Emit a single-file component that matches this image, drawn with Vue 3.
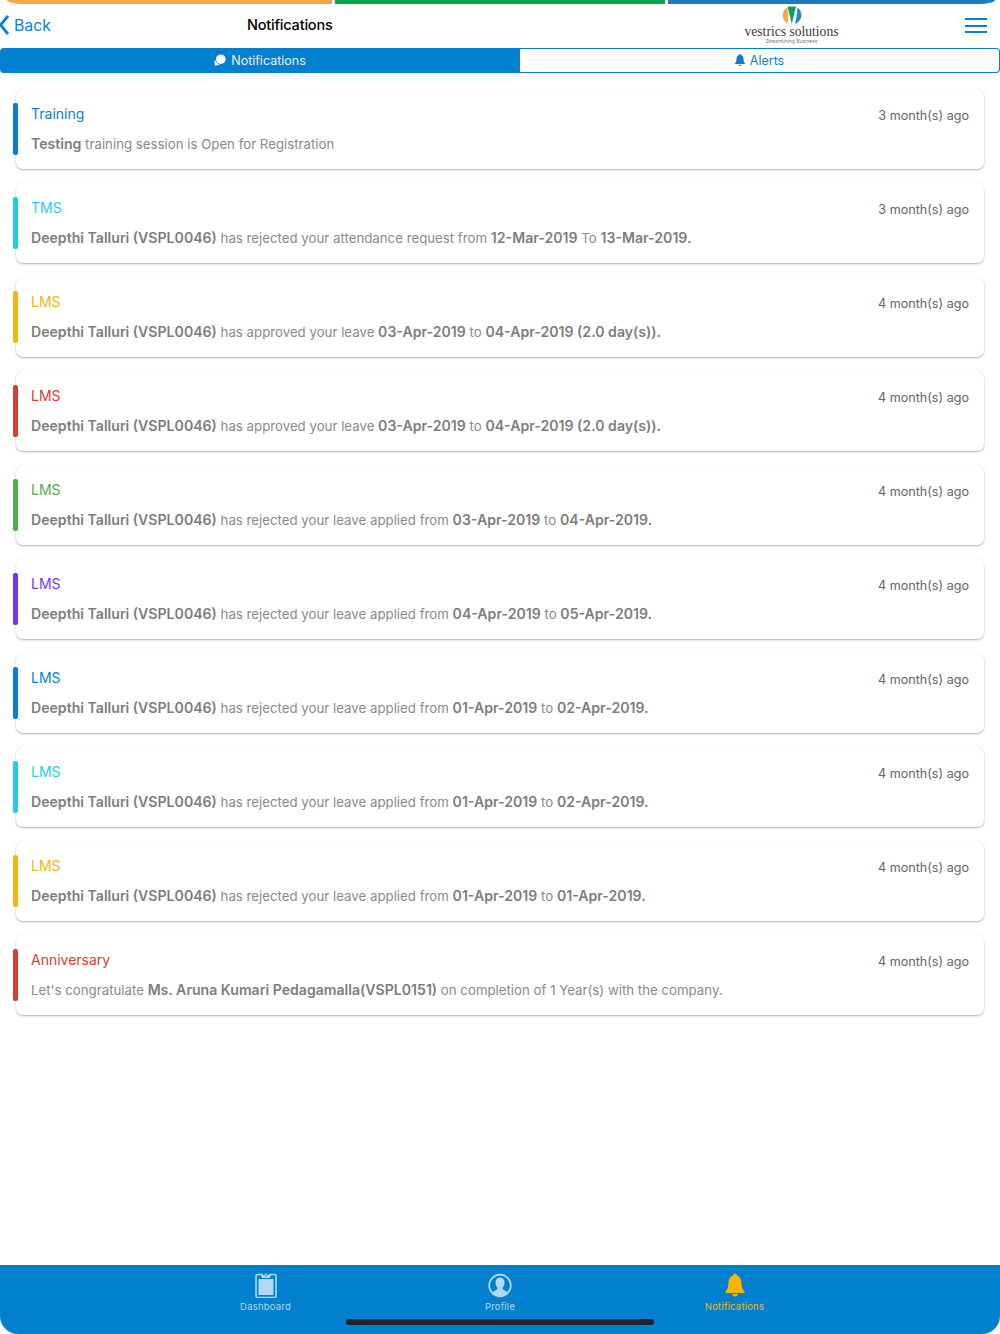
<script setup>
const cards = [
  { title: 'Training', color: '#0a7fd1', time: '3 month(s) ago', parts: [['Testing', 1], [' training session is Open for Registration', 0]] },
  { title: 'TMS', color: '#1fcdea', time: '3 month(s) ago', parts: [['Deepthi Talluri (VSPL0046)', 1], [' has rejected your attendance request from ', 0], ['12-Mar-2019', 1], [' To ', 0], ['13-Mar-2019.', 1]] },
  { title: 'LMS', color: '#f5b50f', time: '4 month(s) ago', parts: [['Deepthi Talluri (VSPL0046)', 1], [' has approved your leave ', 0], ['03-Apr-2019', 1], [' to ', 0], ['04-Apr-2019 (2.0 day(s)).', 1]] },
  { title: 'LMS', color: '#dd3a32', time: '4 month(s) ago', parts: [['Deepthi Talluri (VSPL0046)', 1], [' has approved your leave ', 0], ['03-Apr-2019', 1], [' to ', 0], ['04-Apr-2019 (2.0 day(s)).', 1]] },
  { title: 'LMS', color: '#4caf46', time: '4 month(s) ago', parts: [['Deepthi Talluri (VSPL0046)', 1], [' has rejected your leave applied from ', 0], ['03-Apr-2019', 1], [' to ', 0], ['04-Apr-2019.', 1]] },
  { title: 'LMS', color: '#7238f0', time: '4 month(s) ago', parts: [['Deepthi Talluri (VSPL0046)', 1], [' has rejected your leave applied from ', 0], ['04-Apr-2019', 1], [' to ', 0], ['05-Apr-2019.', 1]] },
  { title: 'LMS', color: '#0a7fd1', time: '4 month(s) ago', parts: [['Deepthi Talluri (VSPL0046)', 1], [' has rejected your leave applied from ', 0], ['01-Apr-2019', 1], [' to ', 0], ['02-Apr-2019.', 1]] },
  { title: 'LMS', color: '#1fcdea', time: '4 month(s) ago', parts: [['Deepthi Talluri (VSPL0046)', 1], [' has rejected your leave applied from ', 0], ['01-Apr-2019', 1], [' to ', 0], ['02-Apr-2019.', 1]] },
  { title: 'LMS', color: '#f5b50f', time: '4 month(s) ago', parts: [['Deepthi Talluri (VSPL0046)', 1], [' has rejected your leave applied from ', 0], ['01-Apr-2019', 1], [' to ', 0], ['01-Apr-2019.', 1]] },
  { title: 'Anniversary', color: '#dd3a32', time: '4 month(s) ago', parts: [["Let's congratulate ", 0], ['Ms. Aruna Kumari Pedagamalla(VSPL0151)', 1], [' on completion of 1 Year(s) with the company.', 0]] },
]
</script>

<template>
  <div class="page">
    <div class="stripes">
      <span class="stripe orange"></span>
      <span class="stripe green"></span>
      <span class="stripe blue"></span>
    </div>

    <header class="header">
      <a class="back">
        <svg width="10" height="20" viewBox="0 0 10 20"><path d="M9 1 1.500 10 9 19" fill="none" stroke="#0a7fd1" stroke-width="2.800"/></svg>
        <span>Back</span>
      </a>
      <h1 class="title">Notifications</h1>
      <div class="logo">
        <svg class="mark" width="20" height="19" viewBox="0 0 20 19">
          <path d="M5 1.500C1.200 4 -0.500 9 1.500 13c.8 1.700 2.200 3.600 4 4.500C6.500 12.500 6.500 6.500 5 1.500Z" fill="#f7a64a"/>
          <path d="M5.500 0.500H14L9.800 18Z" fill="#0aa357"/>
          <path d="M15.500 1.500C19 4 20.500 9 18.500 13c-.8 1.700-2.800 3.800-5.500 5C14.500 12.500 15 6.500 15.500 1.500Z" fill="#2a86c8"/>
        </svg>
        <span class="brand">vestrics solutions</span>
        <span class="tag">Streamlining Business</span>
      </div>
      <div class="burger"><i></i><i></i><i></i></div>
    </header>

    <nav class="tabs">
      <div class="tab active">
        <svg width="12" height="12" viewBox="0 0 12 12"><circle cx="6.800" cy="5.200" r="4.800" fill="#fff"/><path d="M1 5.500C.3 8 .6 10 .8 11.500 2.800 11.500 4.500 11 6 10.500 3.500 10 1.500 8 1 5.500Z" fill="#fff"/></svg>
        Notifications
      </div>
      <div class="tab">
        <svg width="10" height="12" viewBox="0 0 10 12"><path d="M5 0c.6 0 .9.400.9 1C7.700 1.500 8.500 3 8.500 5c0 2.200.5 3.300 1.500 4.500v.5H0v-.5C1 8.300 1.500 7.200 1.500 5 1.500 3 2.300 1.500 4.100 1 4.100.4 4.400 0 5 0ZM3.500 10.700h3C6.300 11.500 5.700 12 5 12s-1.300-.5-1.500-1.300Z" fill="#0a7fd1"/></svg>
        Alerts
      </div>
    </nav>

    <main class="list">
      <article v-for="(c, i) in cards" :key="i" class="card">
        <span class="accent" :style="{ background: c.color }"></span>
        <div class="top">
          <span class="card-title" :style="{ color: c.color }">{{ c.title }}</span>
          <span class="time">{{ c.time }}</span>
        </div>
        <p class="msg"><template v-for="(p, j) in c.parts" :key="j"><b v-if="p[1]">{{ p[0] }}</b><template v-else>{{ p[0] }}</template></template></p>
      </article>
    </main>

    <footer class="bar">
      <div class="items">
        <div class="item">
          <svg width="22" height="25" viewBox="0 0 22 25">
            <path d="M2.500 1.500H7V3h8V1.500h4.500a1.500 1.500 0 0 1 1.500 1.500v20a1.500 1.500 0 0 1-1.500 1.500h-17A1.500 1.500 0 0 1 1 23V3a1.500 1.500 0 0 1 1.500-1.500Z" fill="none" stroke="#b3d8f2" stroke-width="1.600"/>
            <rect x="3.500" y="6" width="15" height="16" fill="#b3d8f2"/>
            <path d="M7 5V2.500h2.500C9.700 1 10.300.5 11 .5s1.300.5 1.500 2H15V5Z" fill="#b3d8f2"/>
            <circle cx="11" cy="2.800" r=".8" fill="#0280d0"/>
          </svg>
          <span>Dashboard</span>
        </div>
        <div class="item">
          <svg width="24" height="25" viewBox="0 0 24 25">
            <circle cx="12" cy="12.500" r="10.800" fill="none" stroke="#b3d8f2" stroke-width="1.700"/>
            <path d="M12 4.500c3 0 4.500 2.200 4.500 5 0 2.200-.8 4-1.800 5-.3 1.500.2 2.200 2 3 1.500.6 2.500 1.200 3 2A10 10 0 0 1 12 23a10 10 0 0 1-7.700-3.500c.5-.8 1.500-1.400 3-2 1.800-.8 2.300-1.500 2-3-1-1-1.800-2.800-1.800-5 0-2.800 1.500-5 4.500-5Z" fill="#b3d8f2"/>
          </svg>
          <span>Profile</span>
        </div>
        <div class="item on">
          <svg width="20" height="25" viewBox="0 0 20 25">
            <path d="M10 .5c1 0 1.600.7 1.700 1.800C15 3.300 16.300 6 16.500 10c.2 4.500 1 6.800 3 8.500V20H.5v-1.500c2-1.700 2.800-4 3-8.500C3.700 6 5 3.300 8.300 2.300 8.400 1.200 9 .5 10 .5Z" fill="#f7b500"/>
            <path d="M7 21h6c-.3 1.400-1.500 2.400-3 2.400S7.300 22.400 7 21Z" fill="#f7b500"/>
          </svg>
          <span>Notifications</span>
        </div>
      </div>
      <div class="home"></div>
    </footer>
  </div>
</template>

<style scoped>
.page {
  width: 1000px;
  height: 1334px;
  display: flex;
  flex-direction: column;
  background: #fff;
  font-family: Inter, "Noto Sans", sans-serif;
  overflow: hidden;
}
.stripes {
  display: flex;
  gap: 3px;
  height: 4px;
  flex: none;
}
.stripe { display: block; flex: none; }
.orange { width: 325px; background: #f9a54c; border-bottom-left-radius: 16px 4px; margin-left: 7px; }
.green { width: 330px; background: #06a651; }
.blue { width: 327px; background: #2379bf; border-bottom-right-radius: 16px 4px; }

.header {
  height: 43.500px;
  flex: none;
  display: flex;
  align-items: center;
  position: relative;
}
.back {
  display: flex;
  align-items: center;
  width: 247px;
  color: #0a7fd1;
  font-size: 15.800px;
  gap: 5px;
  margin-top: -1px;
}
.back svg { margin-left: -1px; }
.back span { margin-left: 0; }
.title {
  margin: -2px 0 0;
  width: 497px;
  font-size: 14.500px;
  font-weight: 500;
  color: #000;
  letter-spacing: -.2px;
}
.logo {
  width: 95px;
  display: flex;
  flex-direction: column;
  align-items: center;
  margin-top: -1px;
}
.mark { display: block; }
.brand {
  font-family: "Liberation Serif", serif;
  font-size: 13.600px;
  line-height: 13px;
  color: #3a3a3a;
  white-space: nowrap;
}
.tag {
  font-size: 5px;
  line-height: 7px;
  color: #777;
  white-space: nowrap;
}
.burger {
  margin-left: auto;
  margin-right: 13px;
  width: 22px;
  display: flex;
  flex-direction: column;
  gap: 4.500px;
}
.burger i { display: block; height: 2px; background: #0a7fd1; }

.tabs {
  display: flex;
  height: 25.500px;
  flex: none;
  font-size: 12.500px;
  color: #0a7fd1;
}
.tab {
  display: flex;
  align-items: center;
  justify-content: center;
  gap: 5px;
  flex: 1;
  border: 1px solid #0280d0;
  border-radius: 0 4px 4px 0;
  border-left: 0;
  box-sizing: border-box;
}
.tab.active {
  flex: none;
  width: 520px;
  border: 0;
  background: #0280d0;
  color: #e9f4fc;
  border-radius: 4px 0 0 4px;
}

.list {
  flex: 1;
  padding: 15.500px 16px 0;
  display: flex;
  flex-direction: column;
  gap: 14.100px;
}
.card {
  position: relative;
  height: 80px;
  box-sizing: border-box;
  padding: 15px 15px 0;
  background: #fff;
  border-radius: 7px;
  box-shadow: 0 1px 2px rgba(0, 0, 0, .3), 0 0 1.500px rgba(0, 0, 0, .06);
}
.accent {
  position: absolute;
  left: -3px;
  top: 14px;
  width: 5px;
  height: 52px;
  border-radius: 2px;
}
.top {
  display: flex;
  justify-content: space-between;
  align-items: flex-start;
}
.card-title { font-size: 14px; line-height: 19px; }
.time {
  font-size: 12.600px;
  line-height: 19px;
  margin-top: 2px;
  color: #666;
}
.msg {
  margin: 9px 0 0;
  font-size: 13.250px;
  line-height: 19px;
  color: #8a8a8a;
  white-space: nowrap;
}
.msg b { font-weight: 600; font-size: 14.100px; color: #7d7d7d; }

.bar {
  height: 69px;
  flex: none;
  background: #0280d0;
  border-radius: 0 0 18px 18px;
  display: flex;
  flex-direction: column;
  align-items: center;
}
.items {
  display: flex;
  justify-content: center;
  padding-top: 8px;
}
.item {
  width: 234.500px;
  display: flex;
  flex-direction: column;
  align-items: center;
  font-size: 9.500px;
  line-height: 12px;
  letter-spacing: .2px;
  color: #b3d8f2;
  gap: 3px;
}
.item svg { display: block; }
.item.on { color: #f7b500; }
.home {
  width: 308px;
  height: 5.500px;
  margin-top: 6px;
  border-radius: 3px;
  background: #1f2226;
}
</style>
